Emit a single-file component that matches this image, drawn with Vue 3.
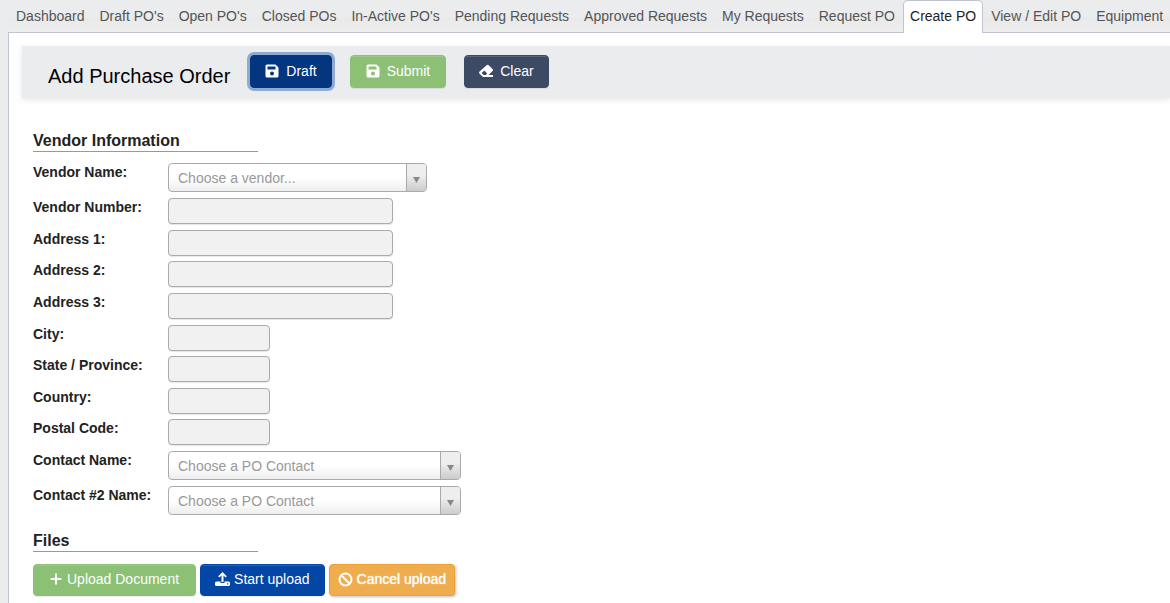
<script setup>
import { ref } from 'vue'

const tabs = [
  'Dashboard', "Draft PO's", "Open PO's", 'Closed POs', "In-Active PO's", 'Pending Requests',
  'Approved Requests', 'My Requests', 'Request PO', 'Create PO', 'View / Edit PO', 'Equipment',
]
const active = ref('Create PO')

const details = [
  { id: 'vendor-number', label: 'Vendor Number:' },
  { id: 'address-1', label: 'Address 1:' },
  { id: 'address-2', label: 'Address 2:' },
  { id: 'address-3', label: 'Address 3:' },
  { id: 'city', label: 'City:', short: true },
  { id: 'state', label: 'State / Province:', short: true },
  { id: 'country', label: 'Country:', short: true },
  { id: 'postal-code', label: 'Postal Code:', short: true },
]
const contacts = [
  { id: 'contact-1', label: 'Contact Name:' },
  { id: 'contact-2', label: 'Contact #2 Name:' },
]
</script>

<template>
  <div class="page">
    <nav class="tabs">
      <a
        v-for="tab in tabs"
        :key="tab"
        href="#"
        class="tab"
        :class="{ active: tab === active }"
        @click.prevent="active = tab"
      >{{ tab }}</a>
    </nav>

    <main class="panel">
      <header class="toolbar">
        <h1>Add Purchase Order</h1>
        <div class="actions">
          <button type="button" class="btn draft">
            <svg class="icon" viewBox="0 0 14 14" aria-hidden="true">
              <path fill-rule="evenodd" d="M2 .5h8.500L13.500 3.500V12a1.500 1.500 0 0 1-1.500 1.500H2A1.500 1.500 0 0 1 .5 12V2A1.500 1.500 0 0 1 2 .5zM2.500 2.500v3h8v-3zM7 7.500a2 2 0 1 0 0 4 2 2 0 0 0 0-4z" />
            </svg>
            Draft
          </button>
          <button type="button" class="btn green submit">
            <svg class="icon" viewBox="0 0 14 14" aria-hidden="true">
              <path fill-rule="evenodd" d="M2 .5h8.500L13.500 3.500V12a1.500 1.500 0 0 1-1.500 1.500H2A1.500 1.500 0 0 1 .5 12V2A1.500 1.500 0 0 1 2 .5zM2.500 2.500v3h8v-3zM7 7.500a2 2 0 1 0 0 4 2 2 0 0 0 0-4z" />
            </svg>
            Submit
          </button>
          <button type="button" class="btn slate">
            <svg class="icon" viewBox="0 0 14 14" aria-hidden="true">
              <path fill-rule="evenodd" d="M7.600 1.200a1.500 1.500 0 0 1 2.100 0l3.800 3.800a1.500 1.500 0 0 1 0 2.100L9.600 11H14v2H4L.6 9.700a1.500 1.500 0 0 1 0-2.100zM5.300 6.600 2.600 8.900 4.700 11h2.100l1.400-1.500z" />
            </svg>
            Clear
          </button>
        </div>
      </header>

      <form class="form" @submit.prevent>
        <h2>Vendor Information</h2>
        <div class="row pick">
          <label for="vendor">Vendor Name:</label>
          <div class="select vendor">
            <select id="vendor"><option>Choose a vendor...</option></select>
            <span class="arrow"><svg viewBox="0 0 7 6" aria-hidden="true"><path d="M0 0h7L3.500 6z" /></svg></span>
          </div>
        </div>
        <div class="details">
          <div v-for="field in details" :key="field.id" class="row">
            <label :for="field.id">{{ field.label }}</label>
            <input :id="field.id" type="text" readonly :class="{ short: field.short }">
          </div>
        </div>
        <div v-for="field in contacts" :key="field.id" class="row pick">
          <label :for="field.id">{{ field.label }}</label>
          <div class="select">
            <select :id="field.id"><option>Choose a PO Contact</option></select>
            <span class="arrow"><svg viewBox="0 0 7 6" aria-hidden="true"><path d="M0 0h7L3.500 6z" /></svg></span>
          </div>
        </div>

        <h2 class="files">Files</h2>
        <div class="uploads">
          <button type="button" class="btn green add">
            <svg class="icon plus" viewBox="0 0 12 14" aria-hidden="true"><path d="M5 1.500h2V6h4.500v2H7v4.500H5V8H.5V6H5z" /></svg>
            Upload Document
          </button>
          <button type="button" class="btn blue">
            <svg class="icon up" viewBox="0 0 15 15" aria-hidden="true">
              <path d="M7.500 0 11.800 4.300 10.700 5.500 8.500 3.400V10h-2V3.400L4.300 5.500 3.200 4.300z" />
              <path fill-rule="evenodd" d="M1.500 9.500H5.500V11h4V9.500h4A1.500 1.500 0 0 1 15 11v1.500A1.500 1.500 0 0 1 13.500 14h-12A1.500 1.500 0 0 1 0 12.500V11a1.500 1.500 0 0 1 1.500-1.500zM12 11.200v1.200h1.200v-1.200z" />
            </svg>
            Start upload
          </button>
          <button type="button" class="btn orange">
            <svg class="icon ban" viewBox="0 0 15 15" aria-hidden="true">
              <circle cx="7.500" cy="7.500" r="6" /><path d="M3.300 3.300l8.400 8.400" />
            </svg>
            Cancel upload
          </button>
        </div>
      </form>
    </main>
  </div>
</template>

<style>
html,
body {
  background: #ebecee;
}
</style>

<style scoped>
.page {
  min-height: 100vh;
  display: flex;
  flex-direction: column;
  overflow: hidden;
  font-family: "Liberation Sans", Arial, sans-serif;
  font-size: 14px;
  color: #222;
}
.page *,
.page {
  box-sizing: border-box;
}
.tabs {
  display: flex;
  gap: 1px;
  padding-left: 9px;
}
.tab {
  flex: none;
  height: 33px;
  padding: 0 6px;
  border: 1px solid transparent;
  border-bottom: 0;
  border-radius: 5px 5px 0 0;
  background: linear-gradient(#ebecee 50%, #e9e9e9 52%, #eee);
  line-height: 31px;
  color: #555;
  text-decoration: none;
  white-space: nowrap;
}
.tab.active {
  z-index: 1;
  border-color: #c0c4d0;
  background: #fff;
  color: #222;
}
.panel {
  flex: 1;
  margin: -1px 0 0 8px;
  padding: 13px 0 7px 13px;
  border: 1px solid #c0c4d0;
  border-width: 1px 0 0 1px;
  background: #fff;
}
.toolbar {
  display: flex;
  align-items: flex-start;
  min-height: 52px;
  padding: 9px 26px 0;
  background: #ebecee;
  box-shadow: 0 2px 6px rgba(0, 0, 0, 0.1);
}
h1 {
  margin: 8px 20px 0 0;
  font-size: 20px;
  font-weight: 400;
  line-height: 26px;
  color: #000;
}
.actions {
  display: flex;
  gap: 18px;
}
.btn {
  display: flex;
  align-items: center;
  height: 33px;
  padding: 0 14px 2px;
  gap: 7px;
  border: 1px solid;
  border-radius: 4px;
  font: 14px/20px "Liberation Sans", Arial, sans-serif;
  color: #fff;
  white-space: nowrap;
  box-shadow: inset 0 1px 0 rgba(255, 255, 255, 0.15), 0 1px 1px rgba(0, 0, 0, 0.08);
}
.draft {
  background: #04357f;
  border-color: #04357f;
  box-shadow: 0 0 0 3px #8faad1;
}
.submit {
  padding: 0 15px 2px;
}
.green {
  background: #8cc075;
  border-color: #8cc075;
}
.slate {
  background: #3c4a64;
  border-color: #3c4a64;
}
.blue {
  background: #0446a6;
  border-color: #0446a6;
}
.orange {
  background: #f0ad4e;
  border-color: #eea236;
  text-shadow: 0 0 1px #fff;
  box-shadow: 1px 1px 3px rgba(0, 0, 0, 0.25);
}
.icon {
  flex: none;
  width: 14px;
  height: 14px;
  fill: currentColor;
}
.plus {
  width: 12px;
}
.up,
.ban {
  width: 15px;
  height: 15px;
}
.ban {
  fill: none;
  stroke: currentColor;
  stroke-width: 2;
}
.form {
  padding: 30px 11px 0;
}
h2 {
  width: 225px;
  height: 24px;
  margin: 0 0 11px;
  border-bottom: 1px solid #999;
  font-size: 16px;
  line-height: 26px;
}
.row {
  display: flex;
  align-items: flex-start;
}
.pick {
  height: 35px;
}
.details {
  display: grid;
  grid-auto-rows: 1fr;
  min-height: 253px;
}
label {
  width: 135px;
  font-weight: 700;
  line-height: 19px;
}
input {
  width: 225px;
  height: 26px;
  padding: 0 8px;
  border: 1px solid #aaa;
  border-radius: 4px;
  background: #f1f1f1;
  font: inherit;
  box-shadow: 0 1px 1px rgba(0, 0, 0, 0.1);
}
input.short {
  width: 102px;
}
.select {
  position: relative;
  width: 293px;
}
.select.vendor {
  width: 259px;
}
select {
  display: block;
  width: 100%;
  height: 29px;
  padding: 0 30px 0 9px;
  border: 1px solid #aaa;
  border-radius: 4px;
  appearance: none;
  background: linear-gradient(#fff 50%, #eee);
  font: 14px "Liberation Sans", Arial, sans-serif;
  color: #999;
}
.arrow {
  position: absolute;
  inset: 1px 1px 1px auto;
  display: flex;
  align-items: center;
  justify-content: center;
  width: 20px;
  padding-top: 4px;
  border-left: 1px solid #aaa;
  border-radius: 0 3px 3px 0;
  background: linear-gradient(#eee 40%, #ccc);
  pointer-events: none;
}
.arrow svg {
  width: 7px;
  height: 6px;
  fill: #888;
}
h2.files {
  margin-top: 7px;
  margin-bottom: 12px;
}
.uploads {
  display: flex;
  gap: 4px;
}
.uploads .btn {
  height: 32px;
  gap: 4px;
}
.uploads .add {
  padding: 0 16px 2px;
  gap: 5px;
}
.uploads .orange {
  padding: 0 8px 2px;
}
</style>
